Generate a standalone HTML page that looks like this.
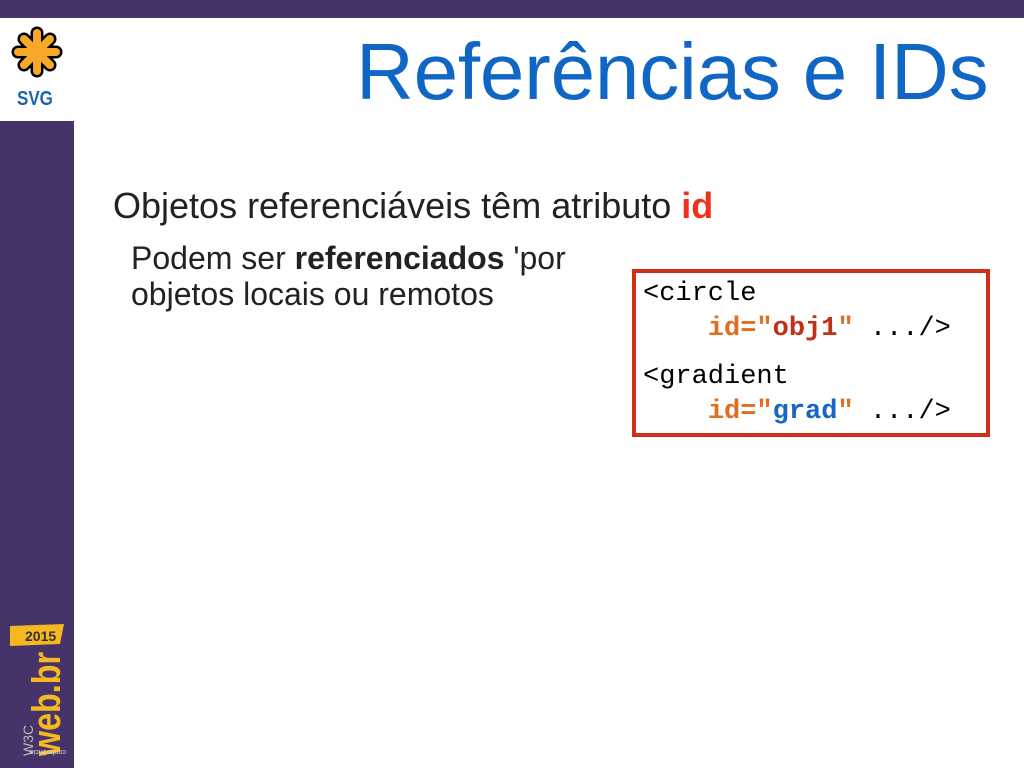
<!DOCTYPE html>
<html><head><meta charset="utf-8"><style>
body{margin:0;width:1024px;height:768px;position:relative;overflow:hidden;background:#fff;font-family:"Liberation Sans",sans-serif}
.top{position:absolute;left:0;top:0;width:1024px;height:18px;background:#46336a}
.side{position:absolute;left:0;top:121px;width:74px;height:647px;background:#46336a}
.t{position:absolute;white-space:nowrap}
.code{position:absolute;left:632px;top:269px;width:358px;height:168px;border:4px solid #d0301a;box-sizing:border-box;font-family:"Liberation Mono",monospace;font-size:27px;color:#000}
.code div{position:absolute;left:7px;white-space:pre}
.o{color:#e07020;font-weight:bold}.r{color:#c0301a;font-weight:bold}.b{color:#1b66c0;font-weight:bold}
</style></head><body>
<div class="top"></div>
<div class="side"></div>
<svg style="position:absolute;left:8px;top:24px" width="58" height="56" viewBox="-29 -28 58 56">
<g stroke="#000" stroke-width="13" stroke-linecap="round">
<line x1="0" y1="-19" x2="0" y2="19"/><line x1="-19" y1="0" x2="19" y2="0"/><line x1="-13" y1="-13" x2="13" y2="13"/><line x1="-13" y1="13" x2="13" y2="-13"/></g>
<g stroke="#f6a929" stroke-width="8" stroke-linecap="round">
<line x1="0" y1="-19" x2="0" y2="19"/><line x1="-19" y1="0" x2="19" y2="0"/><line x1="-13" y1="-13" x2="13" y2="13"/><line x1="-13" y1="13" x2="13" y2="-13"/></g>
<circle r="9" fill="#f6a929"/></svg>
<div class="t" style="left:17px;top:88px;font-size:20px;font-weight:bold;color:#1b66b0;transform:scaleX(0.85);transform-origin:left">SVG</div>
<svg style="position:absolute;left:0;top:620px" width="74" height="140">
<polygon points="10,6 64,4 60,24 10,26" fill="#f6b820"/>
<text x="25" y="21" font-size="14" font-weight="bold" fill="#333" font-family="Liberation Sans">2015</text>
<text transform="translate(60,136) rotate(-90)" font-size="40" font-weight="bold" fill="#f6b820" font-family="Liberation Sans" textLength="104" lengthAdjust="spacingAndGlyphs">web.br</text>
<text transform="translate(33,136) rotate(-90)" font-size="14" fill="#bbb" font-family="Liberation Sans">W3C</text>
<text transform="translate(66,130) rotate(180)" font-size="7" fill="#ddd" font-family="Liberation Sans">conferência</text>
</svg>
<div class="t" style="left:356px;top:26px;font-size:80px;color:#1066c4;letter-spacing:-0.2px">Referências e IDs</div>
<div class="t" style="left:113px;top:185px;font-size:36px;color:#222">Objetos referenciáveis têm atributo <b style="color:#f0301a">id</b></div>
<div class="t" style="left:131px;top:240px;font-size:32px;color:#222;line-height:36px">Podem ser <b>referenciados</b> 'por<br>objetos locais ou remotos</div>
<div class="code">
<div style="top:6px">&lt;circle</div>
<div style="top:41px">    <span class="o">id="</span><span class="r">obj1</span><span class="o">"</span> .../&gt;</div>
<div style="top:89px">&lt;gradient</div>
<div style="top:124px">    <span class="o">id="</span><span class="b">grad</span><span class="o">"</span> .../&gt;</div>
</div>
</body></html>
